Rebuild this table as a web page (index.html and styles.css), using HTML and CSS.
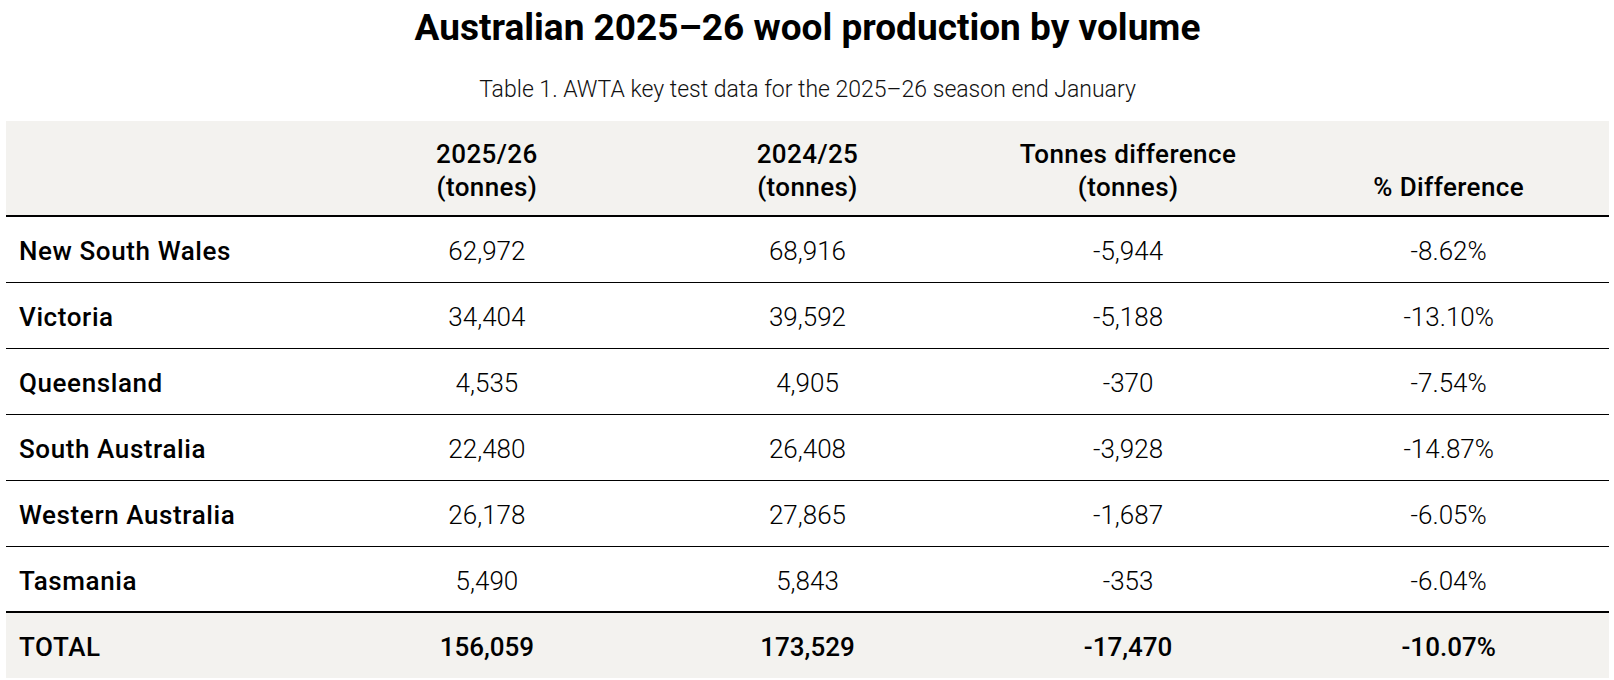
FILE: index.html
```html
<!DOCTYPE html>
<html lang="en">
<head>
<meta charset="utf-8">
<title>Australian 2025–26 wool production by volume</title>
<link rel="stylesheet" href="styles.css">
</head>
<body>
<main class="page">
  <h1 class="title">Australian 2025–26 wool production by volume</h1>
  <p class="caption">Table 1. AWTA key test data for the 2025–26 season end January</p>
  <table class="data">
    <thead>
      <tr>
        <th class="label"></th>
        <th>2025/26<br>(tonnes)</th>
        <th>2024/25<br>(tonnes)</th>
        <th>Tonnes difference<br>(tonnes)</th>
        <th>% Difference</th>
      </tr>
    </thead>
    <tbody>
      <tr><th class="label">New South Wales</th><td>62,972</td><td>68,916</td><td>-5,944</td><td>-8.62%</td></tr>
      <tr><th class="label">Victoria</th><td>34,404</td><td>39,592</td><td>-5,188</td><td>-13.10%</td></tr>
      <tr><th class="label">Queensland</th><td>4,535</td><td>4,905</td><td>-370</td><td>-7.54%</td></tr>
      <tr><th class="label">South Australia</th><td>22,480</td><td>26,408</td><td>-3,928</td><td>-14.87%</td></tr>
      <tr><th class="label">Western Australia</th><td>26,178</td><td>27,865</td><td>-1,687</td><td>-6.05%</td></tr>
      <tr><th class="label">Tasmania</th><td>5,490</td><td>5,843</td><td>-353</td><td>-6.04%</td></tr>
    </tbody>
    <tfoot>
      <tr><th class="label">TOTAL</th><td>156,059</td><td>173,529</td><td>-17,470</td><td>-10.07%</td></tr>
    </tfoot>
  </table>
</main>
</body>
</html>
```
FILE: styles.css
```css
html, body {
  margin: 0;
  padding: 0;
  background: #ffffff;
}

body {
  font-family: Roboto, "Liberation Sans", sans-serif;
  color: #000;
}

.page {
  padding: 0 5px 0 6px;
}

.title {
  margin: 0;
  padding-top: 2px;
  font-size: 37px;
  line-height: 52px;
  font-weight: 700;
  letter-spacing: 0;
  text-align: center;
}

.caption {
  margin: 21px 0 16px;
  font-size: 23px;
  line-height: 30px;
  font-weight: 300;
  text-align: center;
  color: #111;
}

.data {
  width: 100%;
  border-collapse: collapse;
  table-layout: fixed;
  font-size: 26px;
}

.data thead tr {
  background: #f3f2ef;
  border-bottom: 2px solid #000;
  height: 95px;
}

.data thead th {
  padding: 12px 8px 11px;
  vertical-align: bottom;
  text-align: center;
  font-weight: 500;
  line-height: 33px;
  letter-spacing: 0.4px;
}

.data tbody tr {
  height: 66px;
  border-bottom: 1px solid #000;
}

.data tbody tr:last-child {
  border-bottom: none;
}

.data td,
.data tbody th,
.data tfoot th {
  padding: 4px 8px 0;
  vertical-align: middle;
  line-height: 30px;
}

.data td {
  text-align: center;
  font-weight: 300;
}

.data .label {
  text-align: left;
  padding-left: 13px;
  font-weight: 500;
  letter-spacing: 0.6px;
}

.data tfoot tr {
  height: 66px;
  background: #f3f2ef;
  border-top: 2px solid #000;
}

.data tfoot td,
.data tfoot th {
  padding-top: 2px;
  font-weight: 500;
}
```
